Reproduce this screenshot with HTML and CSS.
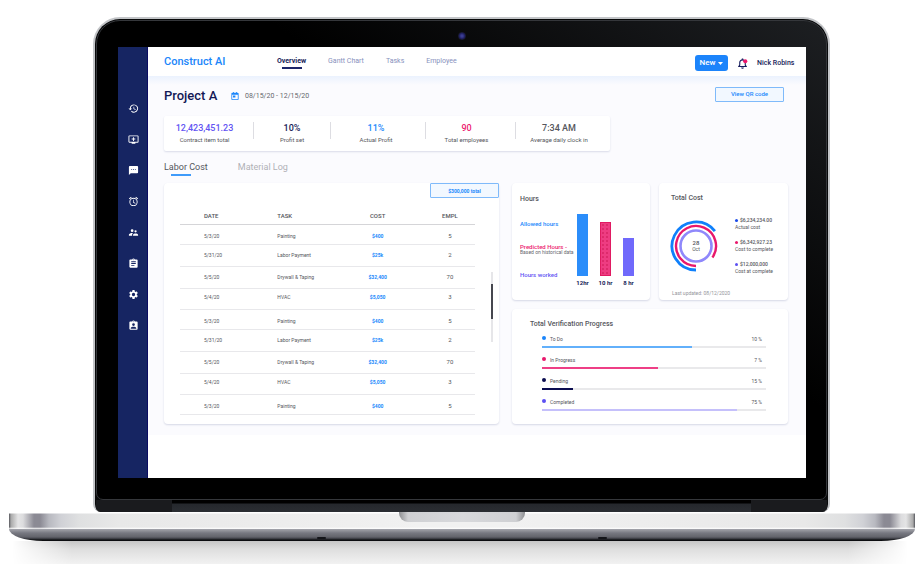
FILE: index.html
```html
<!DOCTYPE html>
<html lang="en">
<head>
<meta charset="utf-8">
<title>Construct AI</title>
<link rel="stylesheet" href="styles.css">
</head>
<body>
<div class="laptop">
  <div class="lid">
    <div class="bezel">
      <span class="camera"></span>
      <div class="screen">
        <aside class="sidebar">
          <a href="#" aria-label="History"><svg viewBox="0 0 24 24"><path d="M13 3a9 9 0 0 0-9 9H1l4 4 4-4H6a7 7 0 1 1 2.1 4.9l-1.5 1.5A9 9 0 1 0 13 3zm-1 5v5l4.3 2.5.7-1.2-3.500-2.100V8z"/></svg></a>
          <a href="#" aria-label="Add screen"><svg viewBox="0 0 24 24"><path d="M21 3H3a2 2 0 0 0-2 2v12c0 1.100.9 2 2 2h5v2h8v-2h5a2 2 0 0 0 2-2V5a2 2 0 0 0-2-2zm0 14H3V5h18v12zm-5-7v2h-3v3h-2v-3H8v-2h3V7h2v3z"/></svg></a>
          <a href="#" aria-label="Messages"><svg viewBox="0 0 24 24"><path d="M20 2H4a2 2 0 0 0-2 2v18l4-4h14a2 2 0 0 0 2-2V4a2 2 0 0 0-2-2zM9 11H7V9h2zm4 0h-2V9h2zm4 0h-2V9h2z"/></svg></a>
          <a href="#" aria-label="Alarms"><svg viewBox="0 0 24 24"><path d="M22 5.700l-4.600-3.900-1.300 1.500 4.600 3.900zM7.900 3.400L6.600 1.900 2 5.700l1.300 1.500zM12.500 8H11v6l4.700 2.900.8-1.300-4-2.300zM12 4a9 9 0 1 0 0 18 9 9 0 0 0 0-18zm0 16a7 7 0 1 1 0-14 7 7 0 0 1 0 14z"/></svg></a>
          <a href="#" aria-label="Team"><svg viewBox="0 0 24 24"><path d="M16.500 12a2.500 2.500 0 1 0 0-5 2.500 2.500 0 0 0 0 5zM9 11a3 3 0 1 0 0-6 3 3 0 0 0 0 6zm7.500 3c-1.800 0-5.500.9-5.500 2.700V19h11v-2.300c0-1.800-3.700-2.700-5.500-2.700zM9 13c-2.300 0-7 1.200-7 3.500V19h7v-2.300c0-.8.3-2.300 2.400-3.500-.9-.1-1.700-.2-2.400-.2z"/></svg></a>
          <a href="#" aria-label="Reports"><svg viewBox="0 0 24 24"><path d="M19 3h-4.200a3 3 0 0 0-5.600 0H5a2 2 0 0 0-2 2v14c0 1.100.9 2 2 2h14a2 2 0 0 0 2-2V5a2 2 0 0 0-2-2zm-7 0a1 1 0 1 1 0 2 1 1 0 0 1 0-2zm2 14H7v-2h7zm3-4H7v-2h10zm0-4H7V7h10z"/></svg></a>
          <a href="#" aria-label="Settings"><svg viewBox="0 0 24 24"><path d="M19.140 12.940c.04-.3.060-.61.060-.94s-.02-.64-.07-.94l2.030-1.580a.49.49 0 0 0 .12-.61l-1.920-3.320a.49.49 0 0 0-.59-.22l-2.390.96a7 7 0 0 0-1.620-.94l-.36-2.540A.48.48 0 0 0 13.920 2.400h-3.840a.47.47 0 0 0-.47.41l-.36 2.540c-.59.24-1.130.57-1.620.94l-2.390-.96a.48.48 0 0 0-.59.22L2.740 8.870a.48.48 0 0 0 .12.61l2.030 1.580a6.600 6.600 0 0 0 0 1.880l-2.030 1.580a.49.49 0 0 0-.12.61l1.920 3.320c.12.22.37.29.59.22l2.390-.96c.5.380 1.030.7 1.620.94l.36 2.540c.05.240.240.410.480.410h3.840c.240 0 .440-.17.470-.41l.36-2.540a7 7 0 0 0 1.620-.94l2.390.96c.22.080.47 0 .59-.22l1.920-3.320a.47.47 0 0 0-.12-.61zM12 15.600a3.600 3.600 0 1 1 0-7.200 3.600 3.600 0 0 1 0 7.200z"/></svg></a>
          <a href="#" aria-label="Badges"><svg viewBox="0 0 24 24"><path d="M19 3h-4.200a3 3 0 0 0-5.600 0H5a2 2 0 0 0-2 2v14c0 1.100.9 2 2 2h14a2 2 0 0 0 2-2V5a2 2 0 0 0-2-2zm-7 0a1 1 0 1 1 0 2 1 1 0 0 1 0-2zm0 4a3 3 0 1 1 0 6 3 3 0 0 1 0-6zm6 12H6v-1.400c0-2 4-3.100 6-3.100s6 1.100 6 3.100z"/></svg></a>
        </aside>
        <div class="app">
          <header class="topbar">
            <a class="brand" href="#">Construct AI</a>
            <nav class="nav">
              <a class="active" href="#">Overview</a>
              <a href="#">Gantt Chart</a>
              <a href="#">Tasks</a>
              <a href="#">Employee</a>
            </nav>
            <button class="new" type="button">New<svg viewBox="0 0 10 6"><path d="M0 0h10L5 6z"/></svg></button>
            <button class="bell" type="button" aria-label="Notifications"><svg viewBox="0 0 24 24"><path d="M4 18.500h16l-2-3V10a6 6 0 0 0-12 0v5.500z" fill="none" stroke="#141b5c" stroke-width="2.400"/><path d="M9 20.500h6a3 3 0 0 1-6 0zM10.500 1h3v3h-3z" fill="#141b5c"/><circle cx="18" cy="7" r="4.500" fill="#f0186c"/></svg></button>
            <span class="user">Nick Robins</span>
          </header>
          <main class="content">
            <div class="titlebar">
              <h1>Project A</h1>
              <svg class="cal" viewBox="0 0 20 20"><path fill="#1a86fb" fill-rule="evenodd" d="M3 2h2V0h2v2h6V0h2v2h2a2 2 0 0 1 2 2v14a2 2 0 0 1-2 2H3a2 2 0 0 1-2-2V4a2 2 0 0 1 2-2zm0 5v11h14V7zm2 2h6v5H5z"/></svg>
              <span class="dates">08/15/20 - 12/15/20</span>
              <button class="outline" type="button">View QR code</button>
            </div>
            <section class="stats">
              <div><b class="violet">12,423,451.23</b><span>Contract item total</span></div>
              <div><b class="navy">10%</b><span>Profit set</span></div>
              <div><b class="blue">11%</b><span>Actual Profit</span></div>
              <div><b class="pink">90</b><span>Total employees</span></div>
              <div><b>7:34 AM</b><span>Average daily clock in</span></div>
            </section>
            <nav class="tabs">
              <a class="active" href="#">Labor Cost</a>
              <a href="#">Material Log</a>
            </nav>
            <div class="panels">
              <section class="card labor">
                <button class="outline" type="button">$300,000 total</button>
                <div class="scroll">
                  <table>
                    <colgroup><col class="c-date"><col class="c-task"><col class="c-cost"><col class="c-empl"></colgroup>
                    <thead><tr><th>DATE</th><th>TASK</th><th>COST</th><th>EMPL</th></tr></thead>
                    <tbody>
                      <tr><td>5/3/20</td><td>Painting</td><td>$400</td><td>5</td></tr>
                      <tr><td>5/31/20</td><td>Labor Payment</td><td>$25k</td><td>2</td></tr>
                      <tr><td>5/5/20</td><td>Drywall &amp; Taping</td><td>$32,400</td><td>70</td></tr>
                      <tr><td>5/4/20</td><td>HVAC</td><td>$5,050</td><td>3</td></tr>
                      <tr><td>5/3/20</td><td>Painting</td><td>$400</td><td>5</td></tr>
                      <tr><td>5/31/20</td><td>Labor Payment</td><td>$25k</td><td>2</td></tr>
                      <tr><td>5/5/20</td><td>Drywall &amp; Taping</td><td>$32,400</td><td>70</td></tr>
                      <tr><td>5/4/20</td><td>HVAC</td><td>$5,050</td><td>3</td></tr>
                      <tr><td>5/3/20</td><td>Painting</td><td>$400</td><td>5</td></tr>
                    </tbody>
                  </table>
                  <div class="track"><i></i></div>
                </div>
              </section>
              <section class="card hours">
                <div class="keys">
                  <h2>Hours</h2>
                  <b class="blue">Allowed hours</b>
                  <b class="pink">Predicted Hours -<small>Based on historical data</small></b>
                  <b class="violet">Hours worked</b>
                </div>
                <div class="bars">
                  <div><i class="bar bg-blue" style="height:62px"></i>12hr</div>
                  <div><i class="bar bg-pink" style="height:54px"></i>10 hr</div>
                  <div><i class="bar bg-violet" style="height:38px"></i>8 hr</div>
                </div>
              </section>
              <section class="card cost">
                <h2>Total Cost</h2>
                <div class="cost-body">
                  <div class="ring">
                    <svg viewBox="0 0 54 54" fill="none">
                      <path d="M27 51A24 24 0 1 1 45.900 12.200" stroke="#0f80fb" stroke-width="2.800"/>
                      <path d="M27 47A20 20 0 1 1 43.400 38.500" stroke="#e8186c" stroke-width="2.400"/>
                      <circle cx="27" cy="27" r="15.500" stroke="#8f88fb" stroke-width="2.600"/>
                    </svg>
                    <p><b>28</b>Oct</p>
                  </div>
                  <ul>
                    <li><b><i class="dot deep"></i>$6,234,234.00</b>Actual cost</li>
                    <li><b><i class="dot rose"></i>$6,342,927.23</b>Cost to complete</li>
                    <li><b><i class="dot indigo"></i>$12,000,000</b>Cost at complete</li>
                  </ul>
                </div>
                <footer>Last updated: 08/12/2020</footer>
              </section>
              <section class="card progress">
                <h2>Total Verification Progress</h2>
                <div class="item"><i class="dot bg-blue"></i><span>To Do</span><span>10 %</span><div class="line"><i class="l-blue" style="width:67%"></i></div></div>
                <div class="item"><i class="dot rose"></i><span>In Progress</span><span>7 %</span><div class="line"><i class="l-pink" style="width:52%"></i></div></div>
                <div class="item"><i class="dot bg-navy"></i><span>Pending</span><span>15 %</span><div class="line"><i class="bg-navy" style="width:14%"></i></div></div>
                <div class="item"><i class="dot indigo"></i><span>Completed</span><span>75 %</span><div class="line"><i class="l-violet" style="width:87%"></i></div></div>
              </section>
            </div>
          </main>
        </div>
      </div>
    </div>
    <div class="hinge"></div>
  </div>
  <div class="base"><div class="notch"></div></div>
  <div class="under"><i></i><i></i></div>
  <div class="shadow"></div>
</div>
</body>
</html>
```
FILE: styles.css
```css
* { box-sizing: border-box; }
body {
  margin: 0;
  background: #fff;
  color: #55565c;
  font: 5px/6px Roboto, "Liberation Sans", sans-serif;
  overflow: hidden;
}
a { color: inherit; text-decoration: none; }
button { font: inherit; border: 0; padding: 0; background: none; cursor: pointer; }
h1, h2, p, ul { margin: 0; padding: 0; list-style: none; }
h2 { font-size: 7px; line-height: 8px; font-weight: 500; color: #55565c; }
svg, i { display: block; }

.blue { color: #1a88fc; }
.pink { color: #ec1b70; }
.violet { color: #6355f3; }
.navy { color: #171c58; }
.bg-blue { background: #1a85fb; }
.bg-navy { background: #0b0d50; }

/* laptop */
.laptop { padding-top: 17px; }
.lid {
  margin: 0 90px 0 93px;
  padding: 1px 1px 0;
  border: 2px solid #c3c5c8;
  border-bottom: 0;
  border-radius: 27px 27px 8px 8px;
  background: #08090a;
  overflow: hidden;
}
.bezel {
  position: relative;
  padding: 26px 20px 21px 21px;
  border: 1px solid #35373b;
  border-radius: 24px 24px 7px 7px;
  background: linear-gradient(215deg, #1d1f22 0, #000 320px);
}
.camera {
  position: absolute;
  top: 11px;
  left: 50%;
  width: 8px;
  height: 8px;
  margin-left: -4px;
  border-radius: 50%;
  background: radial-gradient(#3b3d92 0 1px, #1b1b55 3px, #15161c 4px);
}
.hinge {
  height: 12px;
  border: solid #1a1b1e;
  border-width: 0 76px;
  background: linear-gradient(#000 3px, #25282d 4px, #2b2e33);
}
.base {
  height: 17px;
  margin: 0 5px 0 9px;
  background:
    linear-gradient(#fff 0 1px, transparent 2px 15px, #fff),
    linear-gradient(90deg, #55565c 0, #aaa 2px, #e4e4e5 9px, #dcdcde 14px, #8b8a94 25px, #8b8a94 31px, #b8b9c0 40px, #d0d1d6 52px, #dfe0e1 70px, #e8e8e8 110px, #f1f1f1 45%, #f1f1f1 55%, #e8e8e8 calc(100% - 110px), #dfe0e1 calc(100% - 70px), #d0d1d6 calc(100% - 52px), #b8b9c0 calc(100% - 40px), #8b8a94 calc(100% - 31px), #8b8a94 calc(100% - 25px), #dcdcde calc(100% - 14px), #e4e4e5 calc(100% - 9px), #aaa calc(100% - 2px), #55565c);
}
.notch {
  width: 126px;
  height: 10px;
  margin: 0 auto;
  border-radius: 0 0 9px 9px;
  background: linear-gradient(90deg, #8e8f92, #cfd0d3 9px, #d8d9dc 50%, #cfd0d3 calc(100% - 9px), #8e8f92);
}
.under {
  display: flex;
  justify-content: space-around;
  align-items: flex-end;
  height: 12px;
  margin: 0 5px 0 9px;
  padding: 0 172px 2px;
  border-radius: 0 0 34px 34px / 0 0 12px 12px;
  background: linear-gradient(#a4a5ac, #777881 4px, #62636b 8px, #33343a 10px, #0c0d10 11px);
}
.under i { width: 9px; height: 2px; border-radius: 4px; background: #14151a; }
.shadow {
  height: 24px;
  margin: 0 12px;
  background: linear-gradient(#c6c6c6, #dedede 8px, #f3f3f3 24px);
  mask-image: linear-gradient(90deg, transparent, #000 60px, #000 calc(100% - 60px), transparent);
}

/* shell */
.screen { display: flex; background: #fff; }
.sidebar {
  display: flex;
  flex-direction: column;
  gap: 20px;
  align-items: center;
  width: 30px;
  padding: 56px 0 0 2px;
  border-right: 1px solid #0b0c62;
  background: #162562;
}
.sidebar svg { width: 11px; height: 11px; fill: #fff; }
.app { flex: 1; min-width: 0; padding-bottom: 43px; }
.topbar { display: flex; align-items: center; height: 29px; padding: 0 10px 0 16px; font-size: 7px; line-height: 10px; }
.brand { color: #1b86fa; font-size: 11px; font-weight: 500; width: 113px; }
.nav { display: flex; gap: 22px; flex: 1; color: #8791bd; }
.nav a { padding: 1px 0 2px; }
.nav .active, .tabs .active { position: relative; }
.nav .active { color: #171c58; font-weight: 700; }
.nav .active::after, .tabs .active::after {
  content: "";
  position: absolute;
  bottom: -1px;
  left: 5px;
  width: 20px;
  height: 2px;
  background: #1c2569;
}
.new {
  display: flex;
  align-items: center;
  justify-content: center;
  gap: 3px;
  width: 33px;
  height: 16px;
  margin-top: 3px;
  border-radius: 3px;
  background: #1c84fb;
  color: #fff;
  font-size: 8px;
  font-weight: 500;
}
.new svg { width: 5px; height: 3px; fill: #fff; }
.bell { margin: 3px 9px 0; }
.bell svg { width: 11px; height: 11px; }
.user { min-width: 39px; padding-top: 3px; color: #171c58; font-weight: 500; }

.content {
  padding: 11px 18px 11px 16px;
  background: linear-gradient(#ebf2fe, #fbfbfe 9px);
}
.titlebar { display: flex; align-items: center; height: 18px; padding: 0 4px 0 0; }
.titlebar h1 { width: 67px; color: #131855; font-size: 13px; line-height: 18px; font-weight: 500; }
.cal { width: 8px; height: 8px; }
.dates { flex: 1; padding-left: 6px; font-size: 7px; line-height: 10px; color: #66676d; }
.outline {
  width: 69px;
  height: 15px;
  border: 1px solid #7fbafa;
  border-radius: 1px;
  background: #f2f8ff;
  color: #1a88fc;
  font-size: 5px;
  font-weight: 700;
}
.titlebar .outline { margin-bottom: 4px; font-size: 6px; font-weight: 500; }

.stats {
  display: grid;
  grid-template-columns: 90fr 77fr 95fr 90fr 94fr;
  max-width: 446px;
  min-height: 35px;
  margin-top: 11px;
  padding: 6px 0;
  border-radius: 2px;
  background: #fff;
  box-shadow: 0 1px 2px #d9dbe8;
}
.stats div { padding-right: 8px; text-align: center; border-right: 1px solid #dddde2; height: 17px; }
.stats div:nth-child(2) { padding-right: 0; }
.stats div:nth-child(3) { padding-right: 4px; }
.stats div:last-child { border: 0; }
.stats b { display: block; font-size: 9px; line-height: 12px; font-weight: 500; }
.stats span { display: block; line-height: 12px; font-size: 6px; white-space: nowrap; }

.tabs { display: flex; gap: 30px; height: 32px; padding: 9px 0 0; font-size: 9px; line-height: 14px; color: #b0b1b6; }
.tabs .active { height: 14px; color: #55565c; }
.tabs .active::after { bottom: -2px; left: 7px; background: #3f9bfa; }

.panels { display: grid; grid-template-columns: 339fr 138fr 129fr; gap: 9px; grid-template-rows: auto 1fr; }
.card { border-radius: 4px; background: #fff; box-shadow: 0 1px 2px #d6d8e6; }
.labor { grid-row: span 2; margin-right: 4px; padding-bottom: 9px; }
.labor .outline { display: block; margin: 0 0 0 auto; }
.scroll { display: flex; align-items: center; justify-content: space-between; padding: 11px 6px 0 16px; }
.track { width: 2px; height: 70px; background: #e6e6e9; padding-top: 12px; margin-bottom: 9px; }
.track i { height: 35px; background: #46474f; }
table { width: 295px; max-width: 96%; border-collapse: collapse; table-layout: fixed; }
.c-date { width: 33%; }
.c-task { width: 18%; }
.c-cost { width: 32%; }
.c-empl { width: 17%; }
th { height: 15px; padding: 0; font-size: 6px; font-weight: 500; text-align: left; border-bottom: 1px solid #d5d5d8; }
td { padding: 0; white-space: nowrap; border-bottom: 1px solid #e8e8eb; }
th:first-child, td:first-child { padding-left: 24px; }
th:nth-child(n+3), td:nth-child(n+3) { text-align: center; }
td:nth-child(3) { color: #1a88fc; font-weight: 700; }
td:nth-child(4) { font-size: 6px; }
tbody tr { height: 20px; }
tbody tr:nth-child(4n+2) { height: 22px; }
tbody tr:nth-child(4n+3) { height: 22px; }
tbody tr:nth-child(4n) { height: 21px; }
tbody tr:nth-child(4n+1) td { padding-top: 3px; }
tbody tr:nth-child(4n) td { padding-bottom: 3px; }

.hours { display: flex; justify-content: space-between; padding: 12px 16px 13px 8px; }
.keys { display: flex; flex-direction: column; font-size: 6px; }
.keys b { font-weight: 500; white-space: nowrap; }
.keys h2 + b { margin: 18px 0 17px; }
.keys small { display: block; color: #66676d; font-size: 5px; line-height: 5px; font-weight: 400; }
.keys .violet { margin-top: 17px; }
.bars { display: flex; align-items: flex-end; gap: 12px; color: #171c58; font-size: 6px; font-weight: 700; line-height: 8px; }
.bars div { width: 11px; display: flex; flex-direction: column; align-items: center; white-space: nowrap; }
.bar { width: 11px; margin-bottom: 3px; }
.bar.bg-blue { background: #2b8dfa; }
.bg-pink { border: 1px solid #e01a62; background: #ee3c82 radial-gradient(#dd2a6c 1px, transparent 1px) 0 0 / 4px 4px; }
.bg-violet { background: #7069fb; }

.cost { padding: 11px 8px 4px 12px; }
.cost-body { display: flex; align-items: center; margin-top: 15px; }
.ring { display: grid; place-items: center; width: 54px; margin-left: -2px; }
.ring svg { width: 54px; height: 54px; }
.ring svg, .ring p { grid-area: 1 / 1; }
.ring p { text-align: center; }
.ring b { display: block; font-size: 6px; font-weight: 500; line-height: 7px; }
.cost ul { display: grid; gap: 9px; margin-left: 12px; white-space: nowrap; line-height: 6px; }
.cost li b { display: flex; align-items: center; gap: 2px; line-height: 7px; font-weight: 500; }
.cost .dot { width: 3px; height: 3px; }
.dot { border-radius: 50%; }
.deep { background: #1c4be8; }
.rose { background: #e8186c; }
.indigo { background: #5b50f2; }
.cost footer { margin: 16px 0 0 1px; color: #94959b; }

.progress { grid-column: 2 / 4; padding: 11px 22px 9px 18px; }
.progress h2 { margin-bottom: 8px; }
.item { display: grid; grid-template-columns: 8px 1fr auto; height: 21px; margin-left: 12px; grid-template-rows: 9px 2px; row-gap: 1px; }
.item:last-child { height: 13px; }
.item .dot { width: 4px; height: 4px; }
.item span { line-height: 7px; }
.item span:nth-child(3) { padding-right: 4px; }
.line { grid-column: 1 / 4; background: #e9e9eb; height: 2px; }
.line i { height: 2px; }
.l-blue { background: #62b0fb; }
.l-pink { background: #ee3f86; }
.l-violet { background: #c5c0fb; }
```
